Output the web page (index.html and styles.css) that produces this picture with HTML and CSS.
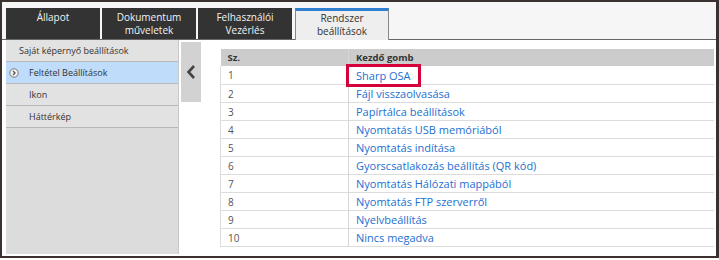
FILE: index.html
```html
<!DOCTYPE html>
<html lang="hu">
<head>
<meta charset="utf-8">
<link rel="stylesheet" href="styles.css">
</head>
<body>
<div class="frame">
  <div class="tabbar">
    <div class="tab">Állapot</div>
    <div class="tab">Dokumentum<br>műveletek</div>
    <div class="tab">Felhasználói<br>Vezérlés</div>
    <div class="tab active">Rendszer<br>beállítások</div>
  </div>
  <div class="main">
    <div class="sidebar">
      <div class="item first">Saját képernyő beállítások</div>
      <div class="item selected"><span class="bullet"><svg width="10" height="10" viewBox="0 0 10 10"><circle cx="5" cy="5" r="4.2" fill="#f4f4f4" stroke="#777" stroke-width="1"/><path d="M4 3 L6 5 L4 7" fill="none" stroke="#555" stroke-width="1.3"/></svg></span>Feltétel Beállítások</div>
      <div class="item">Ikon</div>
      <div class="item">Háttérkép</div>
    </div>
    <div class="toggle"><svg width="10" height="16" viewBox="0 0 10 16"><path d="M8 2 L2.5 8 L8 14" fill="none" stroke="#444" stroke-width="2.6"/></svg></div>
    <div class="tablewrap">
      <table class="list">
        <thead><tr><th class="c1">Sz.</th><th>Kezdő gomb</th></tr></thead>
        <tbody>
          <tr><td class="c1">1</td><td><span class="link hl">Sharp OSA</span></td></tr>
          <tr><td class="c1">2</td><td><span class="link">Fájl visszaolvasása</span></td></tr>
          <tr><td class="c1">3</td><td><span class="link">Papírtálca beállítások</span></td></tr>
          <tr><td class="c1">4</td><td><span class="link">Nyomtatás USB memóriából</span></td></tr>
          <tr><td class="c1">5</td><td><span class="link">Nyomtatás indítása</span></td></tr>
          <tr><td class="c1">6</td><td><span class="link">Gyorscsatlakozás beállítás (QR kód)</span></td></tr>
          <tr><td class="c1">7</td><td><span class="link">Nyomtatás Hálózati mappából</span></td></tr>
          <tr><td class="c1">8</td><td><span class="link">Nyomtatás FTP szerverről</span></td></tr>
          <tr><td class="c1">9</td><td><span class="link">Nyelvbeállítás</span></td></tr>
          <tr><td class="c1">10</td><td><span class="link">Nincs megadva</span></td></tr>
        </tbody>
      </table>
    </div>
  </div>
</div>
</body>
</html>
```

FILE: styles.css
```css
html, body { margin: 0; padding: 0; background: #fff; }
body { font-family: "Open Sans", "Noto Sans", sans-serif; }
.frame {
  width: 719px;
  height: 258px;
  box-sizing: border-box;
  border: 2px solid #3a3230;
  border-right-width: 3px;
  display: flex;
  flex-direction: column;
  overflow: hidden;
}
.tabbar {
  height: 38px;
  box-sizing: border-box;
  background: #f6f6f6;
  border-bottom: 1px solid #666;
  display: flex;
  align-items: flex-end;
  gap: 2px;
  padding: 6px 0 0 4px;
}
.tab {
  width: 94px;
  height: 31px;
  box-sizing: border-box;
  background: #333;
  color: #f2f2f2;
  font-size: 10px;
  line-height: 13px;
  text-align: center;
  padding-top: 3px;
}
.tab.active {
  background: #eeeeee;
  color: #333;
  border: 1px solid #888;
  border-top: 3px solid #2f7fd0;
  border-bottom: none;
  margin-left: 1px;
  height: 32px;
  margin-bottom: -1px;
  padding-top: 1px;
}
.main {
  flex: 1;
  display: flex;
  padding-left: 4px;
  padding-bottom: 2px;
}
.sidebar {
  width: 172px;
  background: #dcdcdc;
  border-right: 1px solid #c8c8c8;
}
.item {
  height: 22px;
  box-sizing: border-box;
  border-bottom: 1px solid #b8b8b8;
  background: #e2e2e2;
  font-size: 9px;
  color: #333;
  line-height: 21px;
  padding-left: 23px;
  display: flex;
  align-items: center;
}
.item.first { padding-left: 13px; }
.item.selected { background: #bfdcfa; padding-left: 3px; }
.bullet { width: 10px; height: 10px; margin-right: 10px; display: flex; }
.toggle {
  width: 20px;
  height: 60px;
  margin: 2px 0 0 2px;
  background: #d2d2d2;
  display: flex;
  align-items: center;
  justify-content: center;
}
.tablewrap {
  flex: 1;
  padding: 9px 0 0 19px;
}
.list {
  width: 494px;
  border-collapse: collapse;
  font-size: 10px;
}
.list th {
  background: #cccccc;
  height: 17px;
  padding: 0 0 0 7px;
  text-align: left;
  font-weight: bold;
  color: #333;
  font-size: 9.5px;
}
.list td {
  height: 17px;
  padding: 0 0 0 7px;
  border-bottom: 1px solid #dcdcdc;
  border-left: 1px solid #dcdcdc;
  color: #555;
}
.list td + td, .list th + th { border-left: 1px solid #d6d6d6; }
.list tbody tr:first-child td { height: 18px; }
.list .c1 { width: 120px; }
.link { color: #1d6fd0; font-size: 11px; }
.hl {
  outline: 3px solid #d6003a;
  padding: 1px 7px;
  margin: 0 -7px;
  position: relative;
  left: 0;
}
```
